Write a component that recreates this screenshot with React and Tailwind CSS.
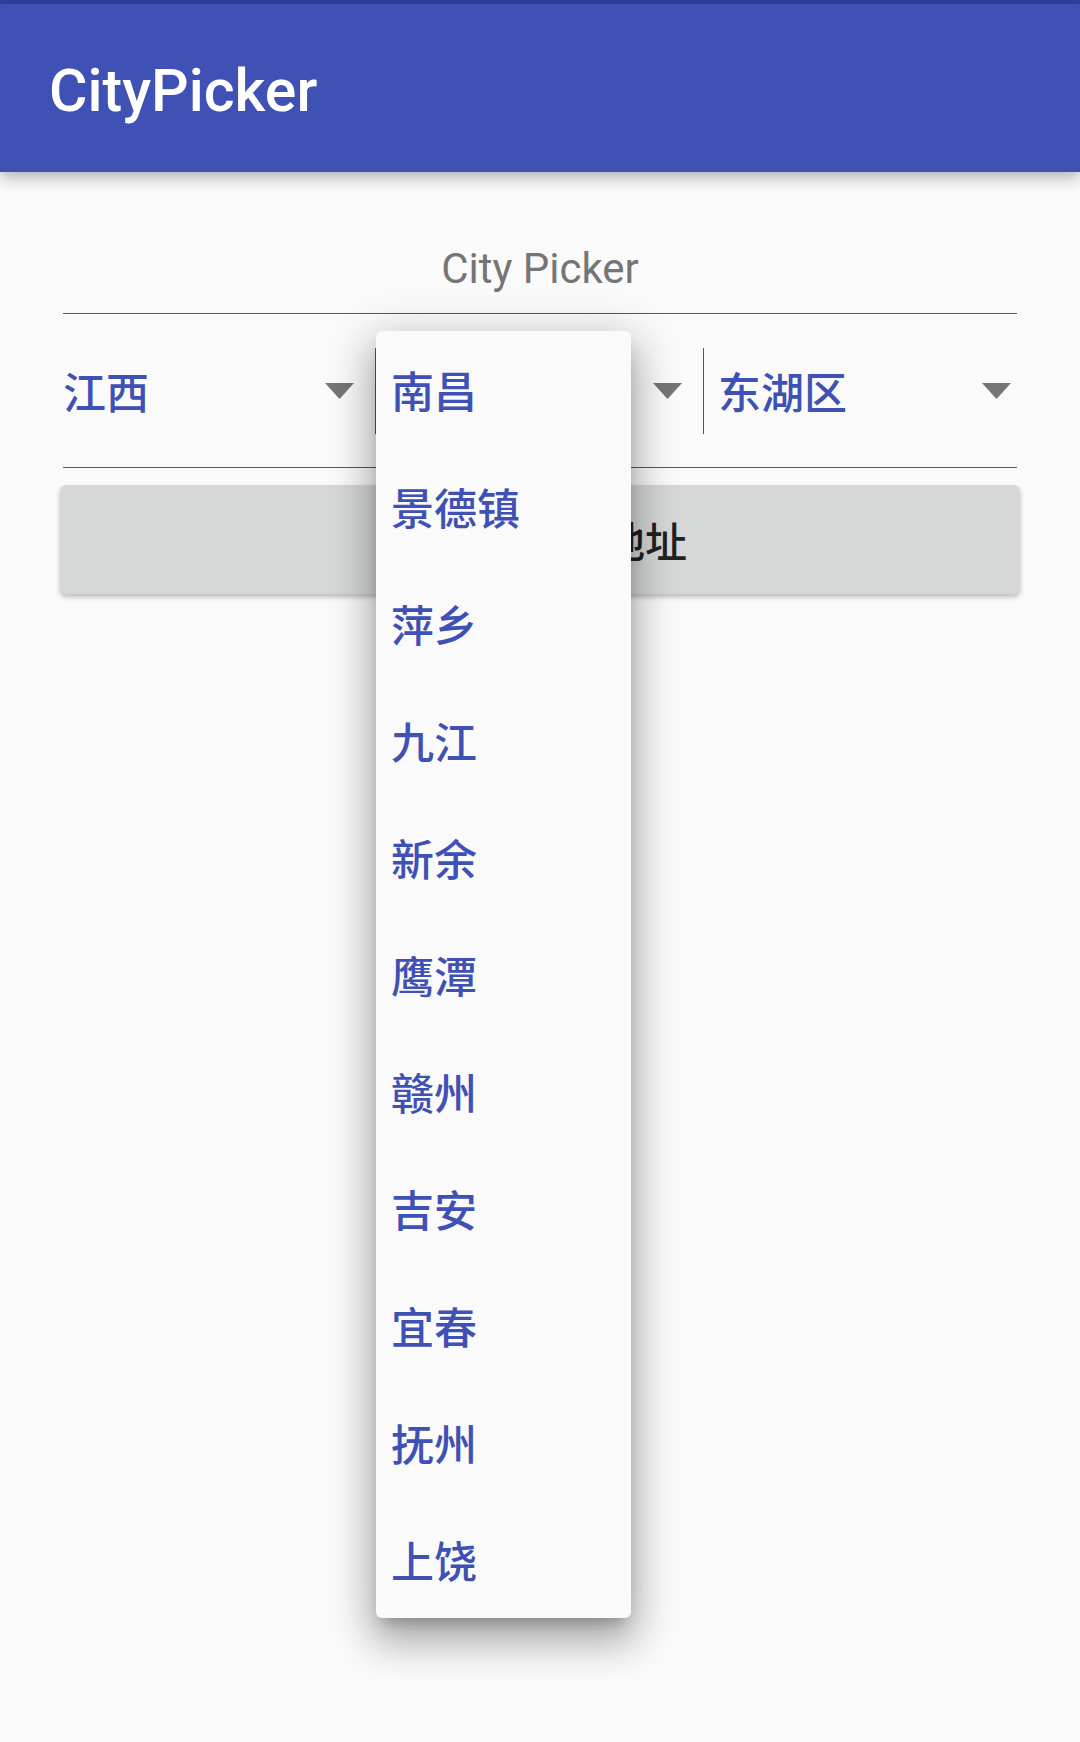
import React from 'react';

const cities = ['南昌', '景德镇', '萍乡', '九江', '新余', '鹰潭', '赣州', '吉安', '宜春', '抚州', '上饶'];

const cjk = { fontFamily: '"Noto Sans CJK SC", "Noto Sans", sans-serif' };

function Arrow() {
  return (
    <svg width="29" height="16" viewBox="0 0 29 16" className="shrink-0">
      <polygon points="0,0 29,0 14.5,16" fill="#757575" />
    </svg>
  );
}

function Spinner({ label, className }) {
  return (
    <div className={`flex h-full items-center justify-between ${className}`}>
      <span className="text-[43px] font-medium leading-none text-[#3f51b5]" style={cjk}>{label}</span>
      <Arrow />
    </div>
  );
}

export default function App() {
  return (
    <div className="relative h-[1742px] w-[1080px] overflow-hidden bg-[#fafafa]">
      {/* status bar strip */}
      <div className="h-[4px] bg-[#303f9f]" />
      {/* toolbar */}
      <div className="relative z-10 flex h-[168px] items-center bg-[#3f51b5] pl-[49px] pt-[6px] shadow-[0_6px_14px_rgba(0,0,0,0.28)]">
        <span className="text-[59px] font-medium text-white" style={{ fontFamily: 'Roboto, sans-serif' }}>
          CityPicker
        </span>
      </div>

      <div className="px-[63px] pt-[72px]">
        <div
          className="h-[70px] border-b border-[#3f51b5] text-center text-[42px] leading-[49px] text-[#757575]"
          style={{ fontFamily: 'Roboto, sans-serif' }}
        >
          City Picker
        </div>

        <div className="flex h-[154px] items-center border-b border-[#3f51b5]">
          <Spinner label="江西" className="w-[312px] pr-[21px]" />
          <div className="h-[86px] w-px bg-[#3f51b5]" />
          <Spinner label="南昌" className="w-[327px] pl-[14px] pr-[21px]" />
          <div className="h-[86px] w-px bg-[#3f51b5]" />
          <Spinner label="东湖区" className="w-[313px] pl-[14px] pr-[6px]" />
        </div>

        <div className="-mx-[3px] mt-[17px] flex h-[109px] items-center justify-center rounded-[6px] bg-[#d6d7d7] shadow-[0_3px_5px_rgba(0,0,0,0.25)]">
          <span className="text-[42px] font-medium text-[#212121]" style={cjk}>获取选择的地址</span>
        </div>
      </div>

      {/* open dropdown */}
      <div className="absolute left-[376px] top-[331px] z-20 w-[255px] rounded-[6px] bg-[#fafafa] shadow-[0_24px_38px_3px_rgba(0,0,0,0.2),0_9px_46px_8px_rgba(0,0,0,0.16),0_11px_15px_-7px_rgba(0,0,0,0.25)]">
        {cities.map((c) => (
          <div key={c} className="flex h-[117px] items-center pl-[15px]">
            <span className="text-[43px] font-medium leading-none text-[#3f51b5]" style={cjk}>{c}</span>
          </div>
        ))}
      </div>
    </div>
  );
}
